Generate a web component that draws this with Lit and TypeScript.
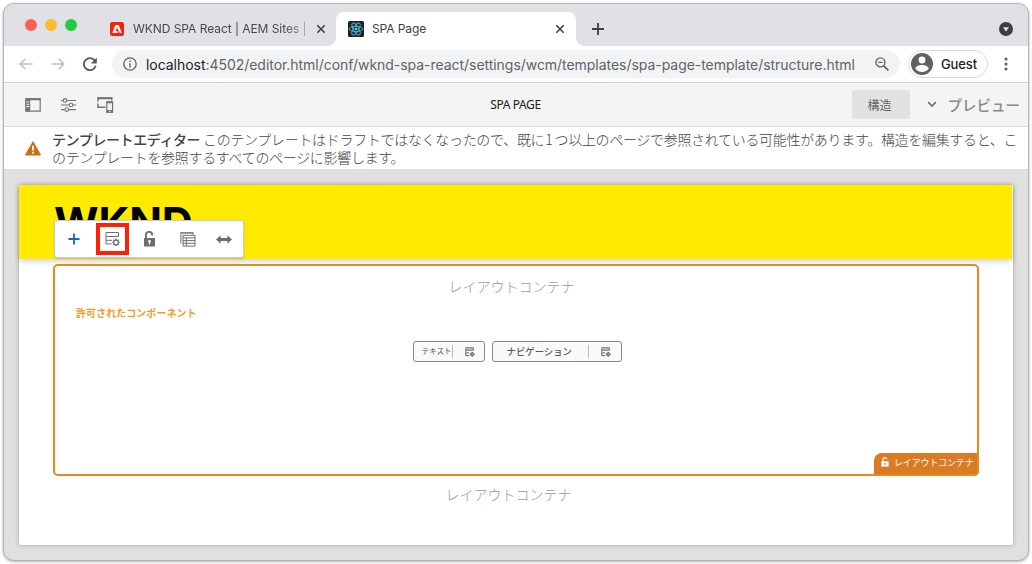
import { LitElement, html, css, svg } from "lit";
import { customElement } from "lit/decorators.js";

const gear = (cx: number, cy: number, r: number, w: number) => svg`
  <circle cx=${cx} cy=${cy} r=${r} fill="none" stroke="currentColor" stroke-width=${w}></circle>
  ${[0, 45, 90, 135, 180, 225, 270, 315].map(
    (a) => svg`<path d=${`M${cx} ${cy - r - 1.5}v1.4`} stroke="currentColor" stroke-width=${w + 0.3} transform=${`rotate(${a} ${cx} ${cy})`}></path>`
  )}`;

const closeIcon = html`<svg class="close" width="10" height="10" viewBox="0 0 10 10"><path d="M1.3 1.3l7.4 7.4M8.7 1.3L1.3 8.7" stroke="#3c4043" stroke-width="1.6"/></svg>`;

const policySmall = html`<svg width="10" height="10" viewBox="0 0 10 10" fill="none" stroke="#666">
  <path d="M.8.8h7.6v2.4H.8zM.8 3.2v5.4h3.4M.8 5.900h3.4" stroke-width="1"/><path d="M1 1.4h7.2v1.3H1z" fill="#aaa" stroke="none"/>
  <circle cx="7.2" cy="7.3" r="1.3" stroke-width="1.3"/><path d="M7.2 4.9v1M7.2 8.7v1M4.8 7.3h1M8.6 7.3h1" stroke-width="1"/></svg>`;

@customElement("app-root")
export class AppRoot extends LitElement {
  static styles = css`
    :host { display: block; width: 1032px; height: 564px; box-sizing: border-box; padding: 3px; background: #fff; overflow: hidden; }
    * { box-sizing: border-box; }
    svg { display: block; flex: none; }
    span { white-space: nowrap; }
    .window { height: 558px; border: 1px solid #b4b4b4; border-radius: 11px; overflow: hidden; display: flex; flex-direction: column; background: #e0e0e0; box-shadow: 0 1px 3px rgba(0,0,0,.3); font-family: Inter, sans-serif; }
    .tabs { height: 42px; flex: none; background: #dfe1e5; display: flex; align-items: flex-end; }
    .lights { display: flex; gap: 8px; padding-left: 21px; height: 42px; padding-top: 15px; }
    .dot { width: 12px; height: 12px; border-radius: 50%; }
    .red { background: #ff5f57; } .amber { background: #febc2e; } .green { background: #28c840; }
    .tab { height: 34px; display: flex; align-items: center; color: #45494d; font-size: 12px; }
    .tab .title { margin-top: -1px; }
    .tab.idle { margin-left: 33px; width: 226px; }
    .tab.idle .title { margin-left: 9px; width: 174px; letter-spacing: -.05px; -webkit-mask-image: linear-gradient(90deg, #000 152px, transparent 184px); }
    .tab.active { width: 240px; background: #fff; border-radius: 8px 8px 0 0; padding: 0 11px 0 12px; color: #3c4043; position: relative; }
    .tab.active::before, .tab.active::after { content: ""; position: absolute; bottom: 0; width: 8px; height: 8px; }
    .tab.active::before { left: -8px; background: radial-gradient(circle at 0 0, transparent 7.6px, #fff 8px); }
    .tab.active::after { right: -8px; background: radial-gradient(circle at 100% 0, transparent 7.6px, #fff 8px); }
    .tab.active .title { margin-left: 8px; letter-spacing: -.1px; }
    .close { margin-left: auto; }
    .tab.idle .close { margin-left: 9px; }
    .plus { margin: 0 0 11px 16px; }
    .chev { margin: 0 15px 10px auto; }
    .nav { height: 37px; flex: none; background: #fff; border-bottom: 1px solid #d3d3d3; display: flex; align-items: center; padding-left: 15px; }
    .nav .fwd { margin-left: 18px; } .nav .reload { margin-left: 18px; }
    .url { margin-left: 15px; width: 788px; height: 28px; border-radius: 14px; background: #f1f3f4; display: flex; align-items: center; padding: 0 11px; }
    .addr { margin-left: 9px; font-size: 14px; color: #5f6368; letter-spacing: -.04px; flex: 1; }
    .addr b { font-weight: 400; color: #202124; }
    .guest { margin-left: 8px; width: 80px; height: 28px; border: 1px solid #dadce0; border-radius: 14px; display: flex; align-items: center; padding-left: 2px; font-size: 13px; color: #202124; font-weight: 500; }
    .guest span { margin-left: 8px; letter-spacing: -.1px; }
    .menu { margin-left: 16px; }
    .aem { height: 44px; flex: none; background: #f4f4f4; border-bottom: 1px solid #dcdcdc; display: grid; grid-template-columns: 1fr auto 1fr; align-items: center; color: #707070; }
    .tools { display: flex; align-items: center; gap: 20px; padding-left: 21px; }
    .tools svg:nth-child(3) { margin-left: 1px; }
    .heading { font: 12px "Noto Sans", sans-serif; letter-spacing: -.38px; color: #222; margin-left: -1px; }
    .modes { display: flex; align-items: center; justify-content: flex-end; padding-right: 8px; font-family: "Noto Sans CJK JP", sans-serif; }
    .mode { width: 58px; height: 29px; border-radius: 3px; background: #e2e2e2; display: flex; align-items: center; justify-content: center; font-size: 12px; color: #666; margin-right: 17px; padding-right: 2px; }
    .preview { font-size: 14.5px; font-weight: 500; color: #8a8a8a; margin-left: 11px; }
    .alert { height: 42px; flex: none; background: #fff; display: flex; align-items: center; padding-left: 21px; }
    .alert p { margin: 0 0 0 11px; width: 974px; white-space: nowrap; font: 300 14px/18px "Noto Sans CJK JP", sans-serif; letter-spacing: -.31px; color: #444; }
    .alert strong { font-weight: 500; letter-spacing: -.4px; }
    .alert .num { margin: 0 2px 0 1px; }
    .canvas { flex: 1; padding: 16px 15px 15px 15px; display: flex; }
    .page { flex: 1; height: 360px; background: #fff; border-radius: 2px; box-shadow: 0 0 4px rgba(0,0,0,.3); position: relative; display: flex; flex-direction: column; font-family: "Noto Sans CJK JP", sans-serif; }
    .hero { height: 74px; margin-right: 1px; background: #ffea00; box-shadow: 0 2px 6px rgba(0,0,0,.2); padding: 12px 0 0 35px; overflow: hidden; flex: none; border-radius: 2px 0 0 0; }
    .logo { display: block; font: 700 43px/51px Inter, sans-serif; letter-spacing: -.2px; color: #000; }
    .toolbar { position: absolute; left: 35px; top: 35px; width: 190px; height: 38px; background: #fff; border: 1px solid #c9c9cf; border-radius: 3px; box-shadow: 0 1px 2px rgba(0,0,0,.15); display: flex; align-items: center; color: #6e6e6e; padding-left: 13px; }
    .toolbar .target { width: 33px; height: 32px; border: 4px solid #fb2207; display: flex; align-items: center; justify-content: center; margin-left: 16px; }
    .toolbar .lock { margin-left: 14px; } .toolbar .table { margin-left: 24px; } .toolbar .resize { margin-left: 20px; }
    .container { margin: 5px 0 0 34px; width: 926px; height: 212px; flex: none; border: 2px solid #e68a20; border-radius: 5px; display: flex; flex-direction: column; align-items: center; background: #fff; position: relative; }
    .label { font-weight: 300; font-size: 14px; line-height: 20px; color: #999; }
    .container .label { margin-top: 10px; margin-right: 9px; }
    .allowed { align-self: flex-start; margin: 10px 0 0 21px; font-weight: 700; font-size: 10.05px; line-height: 14px; color: #f9982a; }
    .chips { display: flex; gap: 7px; margin-top: 21px; margin-left: 2px; }
    .chip { height: 21px; border: 1px solid #888; border-radius: 3px; background: #fafafa; display: flex; align-items: center; color: #555; }
    .chip span { margin-top: -2px; }
    .chip.text { width: 72px; padding-left: 8px; font-size: 7.6px; }
    .chip.navi { width: 130px; padding-left: 14px; font-size: 9.4px; font-weight: 500; }
    .chip i { width: 1px; height: 13px; background: #bbb; }
    .chip.text i { margin: 0 12px 0 0; } .chip.navi i { margin: 0 12px 0 16px; }
    .badge { position: absolute; right: -2px; bottom: -2px; width: 105px; height: 23px; background: #da7b24; border-radius: 8px 0 5px 0; border-right: 2px solid #e68a20; border-bottom: 2px solid #e68a20; display: flex; align-items: center; padding: 0 0 3px 7px; color: #fff; font-size: 8.9px; }
    .badge span { margin-left: 5px; }
    .outer { align-self: center; margin-top: 8px; margin-right: 15px; }
  `;

  render() {
    return html`
    <div class="window">
      <div class="tabs">
        <div class="lights"><div class="dot red"></div><div class="dot amber"></div><div class="dot green"></div></div>
        <div class="tab idle">
          <svg width="14" height="14" viewBox="0 0 14 14"><rect width="14" height="14" rx="2.2" fill="#fa1e0c"/><path d="M5.3 3h3.4l3 8H9.5L7 5.4 5.5 8.9h1.7l.9 2.1H2.3z" fill="#fff"/></svg>
          <span class="title">WKND SPA React | AEM Sites |</span>${closeIcon}
        </div>
        <div class="tab active">
          <svg width="16" height="16" viewBox="0 0 16 16"><rect width="16" height="16" rx="1.5" fill="#20232a"/><g fill="none" stroke="#4cb5cc" stroke-width=".9"><ellipse cx="8" cy="8" rx="6.7" ry="2.6"/><ellipse cx="8" cy="8" rx="6.7" ry="2.6" transform="rotate(60 8 8)"/><ellipse cx="8" cy="8" rx="6.7" ry="2.6" transform="rotate(120 8 8)"/></g><circle cx="8" cy="8" r="1.3" fill="#61dafb"/></svg>
          <span class="title">SPA Page</span>${closeIcon}
        </div>
        <svg class="plus" width="12" height="12" viewBox="0 0 12 12"><path d="M6 0v12M0 6h12" stroke="#3c4043" stroke-width="1.8"/></svg>
        <svg class="chev" width="14" height="14" viewBox="0 0 14 14"><circle cx="7" cy="7" r="7" fill="#3c4043"/><path d="M3.9 5.2h6.2L7 9.4z" fill="#dfe1e5"/></svg>
      </div>
      <div class="nav">
        <svg width="14" height="12" viewBox="0 0 14 12" fill="none" stroke="#bcbec1" stroke-width="1.5"><path d="M13.5 6H1.3M6.4.8L1.2 6l5.2 5.2"/></svg>
        <svg class="fwd" width="14" height="12" viewBox="0 0 14 12" fill="none" stroke="#bcbec1" stroke-width="1.5"><path d="M.5 6h12.2M7.6.8L12.8 6l-5.2 5.2"/></svg>
        <svg class="reload" width="14" height="14" viewBox="0 0 14 14"><path d="M12 4A6 6 0 1 0 12.7 8.8" fill="none" stroke="#55585c" stroke-width="1.8"/><path d="M13.8.6v6H7.8z" fill="#55585c"/></svg>
        <div class="url">
          <svg width="14" height="14" viewBox="0 0 14 14"><circle cx="7" cy="7" r="6.2" fill="none" stroke="#5f6368" stroke-width="1.3"/><path d="M7 6.2v4.2M7 3.5v1.5" stroke="#5f6368" stroke-width="1.4"/></svg>
          <span class="addr"><b>localhost</b>:4502/editor.html/conf/wknd-spa-react/settings/wcm/templates/spa-page-template/structure.html</span>
          <svg width="14" height="14" viewBox="0 0 14 14" fill="none" stroke="#5f6368" stroke-width="1.4"><circle cx="5.4" cy="5.4" r="4.5"/><path d="M3.2 5.4h4.4"/><path d="M8.8 8.8l4.6 4.6" stroke-width="1.8"/></svg>
        </div>
        <div class="guest">
          <svg width="22" height="22" viewBox="0 0 22 22"><circle cx="11" cy="11" r="11" fill="#5f6368"/><circle cx="11" cy="7" r="3.4" fill="#fff"/><path d="M4.2 15.6c.8-2.6 4-3.6 6.8-3.6s6 1 6.8 3.6A8.4 8.4 0 0 1 11 19a8.4 8.4 0 0 1-6.8-3.4z" fill="#fff"/></svg>
          <span>Guest</span>
        </div>
        <svg class="menu" width="4" height="14" viewBox="0 0 4 14" fill="#5f6368"><circle cx="2" cy="2" r="1.6"/><circle cx="2" cy="7" r="1.6"/><circle cx="2" cy="12" r="1.6"/></svg>
      </div>
      <div class="aem">
        <div class="tools">
          <svg width="16" height="14" viewBox="0 0 16 14"><path d="M.8.8h14.4v12.4H.8z" fill="none" stroke="#747474" stroke-width="1.2"/><path d="M.5.3h15v2H.5zM.5 1h4.7v12.5H.5z" fill="#747474"/><path d="M1.4 4h2.8M1.4 6.3h2.8M1.4 8.6h2.8" stroke="#f4f4f4" stroke-width="1.1"/></svg>
          <svg width="15" height="14" viewBox="0 0 15 14" fill="none" stroke="#747474" stroke-width="1.1"><path d="M0 2.5h2.2M6 2.5h9M0 7h8.2M12 7h3M0 11.6h3.8M7.6 11.6H15"/><circle cx="4" cy="2.4" r="1.8"/><circle cx="10" cy="7" r="1.8"/><circle cx="5.7" cy="11.6" r="1.8"/></svg>
          <svg width="17" height="16" viewBox="0 0 17 16" fill="none" stroke="#747474"><path d="M8.5 10.3H1V.9h13.7v2.5" stroke-width="1.5"/><path d="M.3.2h15v2H.3z" fill="#747474" stroke="none"/><path d="M.3 4.5h1.8v2H.3z" fill="#fff" stroke="none"/><path d="M9.8 4.8h5.8v10.4H9.8z" stroke-width="1.2"/><path d="M9.5 4.2H16v2H9.5zM9.5 13H16v2.8H9.5z" fill="#747474" stroke="none"/><path d="M12 14.3h1.4" stroke="#fff"/></svg>
        </div>
        <span class="heading">SPA PAGE</span>
        <div class="modes">
          <div class="mode">構造</div>
          <svg width="10" height="7" viewBox="0 0 10 7"><path d="M1.2 1.2L5 5l3.8-3.8" fill="none" stroke="#707070" stroke-width="1.7"/></svg>
          <span class="preview">プレビュー</span>
        </div>
      </div>
      <div class="alert">
        <svg width="16" height="15" viewBox="0 0 16 15"><path d="M8 .7L15.5 14H.5z" fill="#cb6f10" stroke="#cb6f10" stroke-linejoin="round"/><path d="M8 4.8v4.8M8 10.7v1.8" stroke="#fff" stroke-width="1.8"/></svg>
        <p><strong>テンプレートエディター</strong> このテンプレートはドラフトではなくなったので、既に<span class="num">1</span>つ以上のページで参照されている可能性があります。構造を編集すると、こ<br>のテンプレートを参照するすべてのページに影響します。</p>
      </div>
      <div class="canvas">
        <div class="page">
          <div class="hero"><span class="logo">WKND</span></div>
          <div class="container">
            <span class="label">レイアウトコンテナ</span>
            <span class="allowed">許可されたコンポーネント</span>
            <div class="chips">
              <div class="chip text"><span>テキスト</span><i></i>${policySmall}</div>
              <div class="chip navi"><span>ナビゲーション</span><i></i>${policySmall}</div>
            </div>
            <div class="badge">
              <svg width="8" height="10" viewBox="0 0 8 10"><path d="M.3 4.3h7.4V9.6H.3z" fill="#fff"/><path d="M2 4.5V2.6a1.8 1.8 0 0 1 3.7-.3" fill="none" stroke="#fff" stroke-width="1.2"/><path d="M4 6v2" stroke="#da7b24" stroke-width="1.2"/></svg>
              <span>レイアウトコンテナ</span>
            </div>
          </div>
          <span class="label outer">レイアウトコンテナ</span>
          <div class="toolbar">
            <svg width="12" height="12" viewBox="0 0 12 12"><path d="M6 .5v11M.5 6h11" stroke="#1764c0" stroke-width="1.8"/></svg>
            <div class="target"><svg width="16" height="16" viewBox="0 0 16 16" fill="none" stroke="currentColor"><path d="M1 1.5h12.5v4H1zM1 5.5v7.5M1 9.3h6M1 12.9h5.5" stroke-width="1"/>${gear(11, 11.4, 2.3, 1.1)}</svg></div>
            <svg class="lock" width="13" height="16" viewBox="0 0 13 16"><path d="M1 7h11v8.5H1z" fill="currentColor"/><path d="M3 7.5V4.3a3 3 0 0 1 6.2-.6v.8" fill="none" stroke="currentColor" stroke-width="1.9"/><circle cx="6.5" cy="10.2" r="1.3" fill="#fff"/><path d="M6.5 10.5v3" stroke="#fff" stroke-width="1.2"/></svg>
            <svg class="table" width="16" height="15" viewBox="0 0 16 15" fill="none" stroke="currentColor" stroke-width="1"><path d="M.9 11.5V.9h12.2v1.8M.3.9h13"/><path d="M3 3.3h12v10.8H3zM3 5.9h12M3 8.6h12M3 11.3h12M6.3 5.9v8.2"/></svg>
            <svg class="resize" width="16" height="9" viewBox="0 0 16 9" fill="currentColor"><path d="M0 4.5L4.6.2v2.9h6.8V.2L16 4.5l-4.6 4.3V5.9H4.6v2.9z"/></svg>
          </div>
        </div>
      </div>
    </div>`;
  }
}
